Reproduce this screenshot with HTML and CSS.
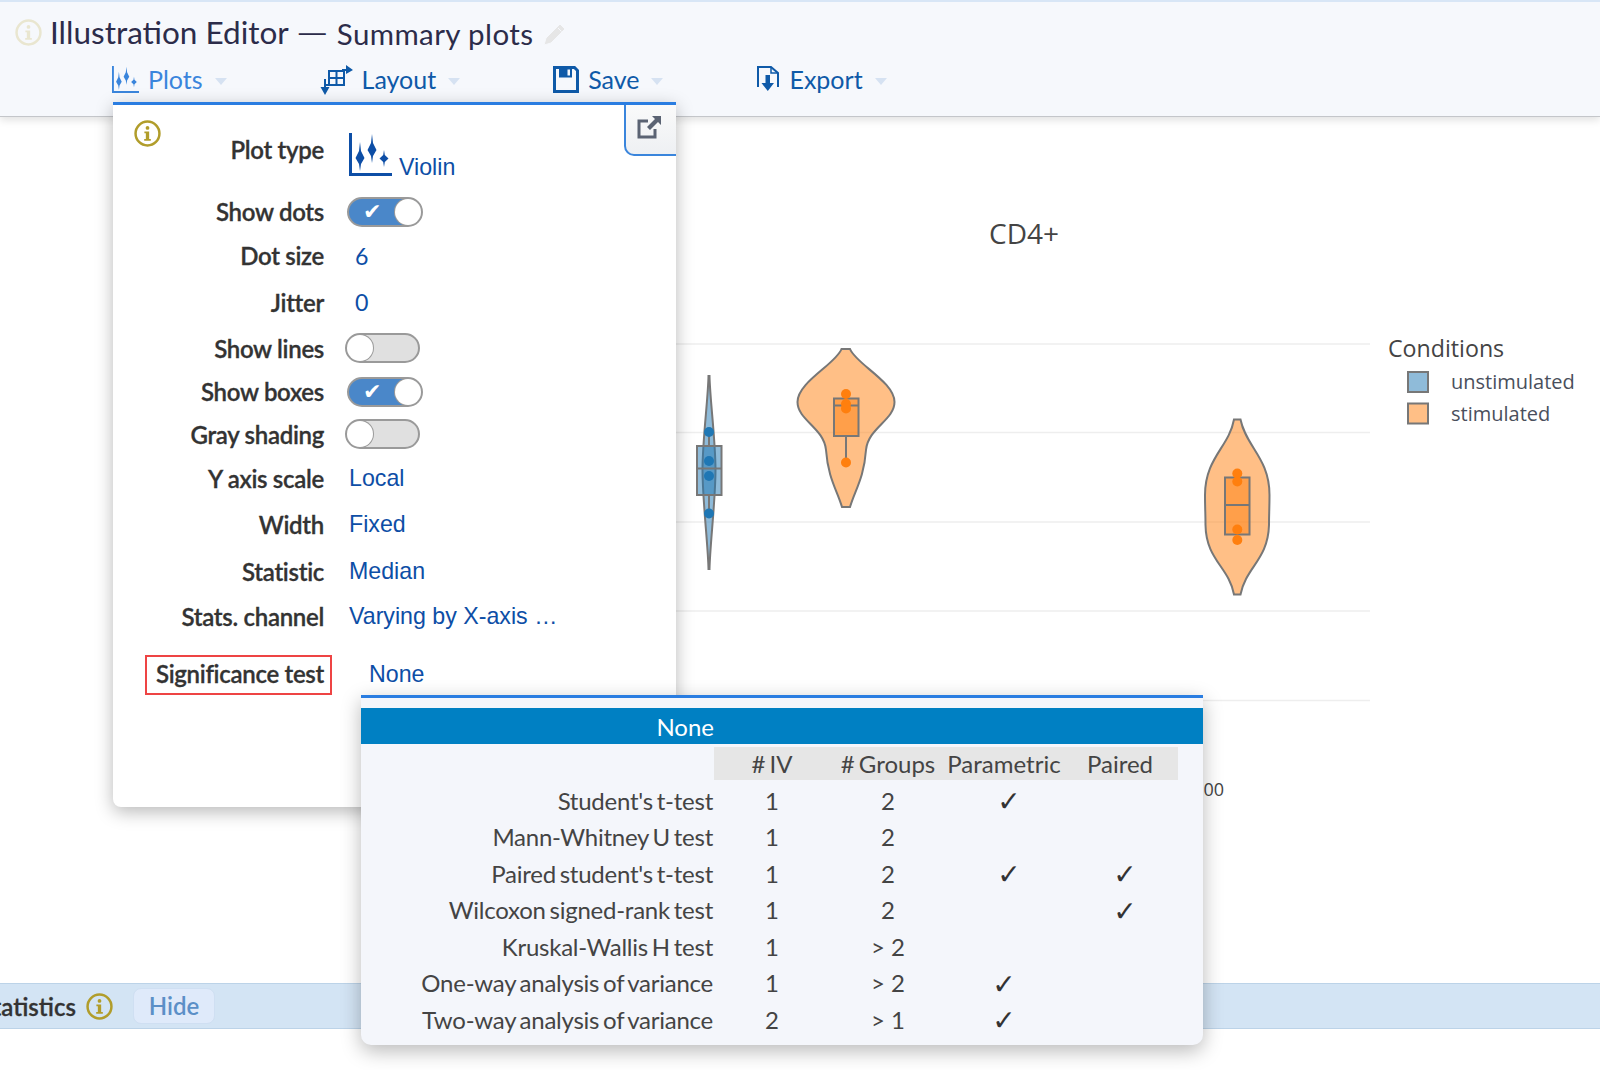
FILE: index.html
```html
<!DOCTYPE html>
<html lang="en">

<head>
    <meta charset="UTF-8">
    <title>Illustration Editor</title>
    <link rel="stylesheet" href="styles.css">
</head>

<body>
    <svg class="defs" width="0" height="0">
        <symbol id="icon-info" viewBox="0 0 26 26">
            <circle cx="13" cy="13" r="11.5" fill="none" stroke="currentColor" stroke-width="2.4" />
            <circle cx="13" cy="7.6" r="1.8" fill="currentColor" />
            <path d="M10 11h4.6v7.2h1.6v1.8H9.8v-1.8h1.6v-5.4H10z" fill="currentColor" />
        </symbol>
        <symbol id="icon-violin" viewBox="0 0 43 43">
            <path d="M1.500 0v41.500H43" fill="none" stroke="currentColor" stroke-width="3" />
            <path d="M11 9l1 9 3.500 7-3.500 6-1 7-1-7-3.500-6 3.500-7zM23 1l1 9 3.500 7-3.500 6-1 7-1-7-3.500-6 3.500-7zM35 17l.8 5 3.700 3.500-3.700 3.500-.8 5-.8-5-3.700-3.500 3.700-3.500z" fill="currentColor" />
        </symbol>
    </svg>

    <header class="topbar">
        <div class="title-row">
            <svg class="title-info"><use href="#icon-info" /></svg>
            <span class="title">Illustration Editor</span>
            <span class="dash">—</span>
            <span class="subtitle">Summary plots</span>
            <svg class="pencil" viewBox="0 0 24 24">
                <path d="M17 2l5 5L8 21l-7 2 2-7zM15 6l3.500 3.500" fill="currentColor" stroke="#f6f8fc" stroke-width="1" />
            </svg>
        </div>
        <nav class="menu">
            <div class="menu-item active">
                <svg class="plots-icon"><use href="#icon-violin" /></svg>
                <span>Plots</span><i class="caret"></i>
            </div>
            <div class="menu-item">
                <svg class="layout-icon" viewBox="0 0 33 30">
                    <path d="M9 6h15v14H9zM9 13h15M16.500 6v14M6 20h3" fill="none" stroke="currentColor" stroke-width="2" />
                    <path d="M22 5h5M5 14v9" fill="none" stroke="currentColor" stroke-width="2" />
                    <path d="M26 0l7 5-7 4zM.5 22h9l-4.500 8z" fill="currentColor" />
                </svg>
                <span>Layout</span><i class="caret"></i>
            </div>
            <div class="menu-item">
                <svg class="save-icon" viewBox="0 0 26 27">
                    <path d="M1.500 1.500h20l3 3v21h-23z" fill="none" stroke="currentColor" stroke-width="3" />
                    <path d="M6 1.500h13v10H6z" fill="currentColor" />
                    <path d="M14.500 3.500h2.500v6h-2.500z" fill="#f6f8fc" />
                </svg>
                <span>Save</span><i class="caret"></i>
            </div>
            <div class="menu-item">
                <svg class="export-icon" viewBox="0 0 24 28">
                    <path d="M2 22V2h13l7 6v14" fill="none" stroke="currentColor" stroke-width="2" />
                    <path d="M15 2v6h7" fill="none" stroke="currentColor" stroke-width="1.500" />
                    <path d="M9.500 10h4.500v8h4l-6.200 8-6.300-8h4z" fill="currentColor" />
                </svg>
                <span>Export</span><i class="caret"></i>
            </div>
        </nav>
    </header>

    <main class="workspace">
        <svg class="chart" viewBox="0 116 1600 868">
            <g class="grid">
                <path d="M676 344H1370M676 432.500H1370M676 522H1370M676 611H1370M676 700.500H1370" />
            </g>
            <text class="chart-title" x="1024" y="244" text-anchor="middle">CD4+</text>
            <text class="tick" x="1224" y="796" text-anchor="end">1000</text>

            <!-- unstimulated -->
            <g class="trace blue">
                <path class="violin" d="M708.500 376h1C710 400 715.500 440 715.500 470S710 545 709.500 569h-1C708 545 702.500 500 702.500 470S708 400 708.500 376z" />
                <path class="whisker" d="M709 432V446M709 495V513" />
                <rect class="box" x="697" y="446" width="24.500" height="49" />
                <path class="whisker" d="M697 468.500H721.500" />
                <circle cx="709" cy="432" r="5" />
                <circle cx="709" cy="461" r="5" />
                <circle cx="709" cy="476" r="5" />
                <circle cx="709" cy="513.500" r="5" />
            </g>

            <!-- stimulated, first group -->
            <g class="trace orange">
                <path class="violin" d="M841.500 349h8.500C856 364 894.500 382 894.500 402C894.500 420 868 428 866 450C864 478 855 490 850 507h-8C837 490 828 478 826 450C824 428 797.500 420 797.500 402C797.500 382 836 364 841.500 349z" />
                <path class="whisker" d="M846 436V462" />
                <rect class="box" x="834" y="398.500" width="24.500" height="37.500" />
                <path class="whisker" d="M834 405.500H858.500" />
                <circle cx="846" cy="394" r="5" />
                <circle cx="846" cy="404" r="5" />
                <circle cx="846" cy="408.500" r="5" />
                <circle cx="846" cy="462.500" r="5" />
            </g>

            <!-- stimulated, second group -->
            <g class="trace orange">
                <path class="violin" d="M1234 419.500h6.500C1246 447 1269.500 458 1269.500 495C1269.500 508 1269 514 1269 525C1268 560 1246 567 1240.500 594.500h-6.500C1229 567 1206 560 1205.500 525C1205.500 514 1205 508 1205 495C1205 458 1229 447 1234 419.500z" />
                <rect class="box" x="1225" y="477.500" width="24.500" height="57" />
                <path class="whisker" d="M1225 505H1249.500" />
                <circle cx="1237.300" cy="473.500" r="5" />
                <circle cx="1237.300" cy="481.500" r="5" />
                <circle cx="1237.300" cy="529.500" r="5" />
                <circle cx="1237.300" cy="540" r="5" />
            </g>

            <text class="legend-title" x="1388" y="357">Conditions</text>
            <rect class="swatch blue-fill" x="1408" y="372" width="20" height="20" />
            <text class="legend-label" x="1451" y="389">unstimulated</text>
            <rect class="swatch orange-fill" x="1408" y="403.500" width="20" height="20" />
            <text class="legend-label" x="1451" y="421">stimulated</text>
        </svg>

        <section class="plot-panel">
            <svg class="panel-info"><use href="#icon-info" /></svg>
            <div class="panel-tab">
                <svg viewBox="0 0 24 23">
                    <path d="M11 5H2v16h16v-8" fill="none" stroke="currentColor" stroke-width="3" />
                    <path d="M15 0h9v9l-3-3-8 8-3-3 8-8z" fill="currentColor" />
                </svg>
            </div>

            <div class="row row-plot-type">
                <div class="label">Plot type</div>
                <div class="value violin-value">
                    <svg><use href="#icon-violin" /></svg>
                    <span>Violin</span>
                </div>
            </div>
            <div class="row h43">
                <div class="label">Show dots</div>
                <div class="toggle on"></div>
            </div>
            <div class="row h45">
                <div class="label">Dot size</div>
                <div class="value number">6</div>
            </div>
            <div class="row h48">
                <div class="label">Jitter</div>
                <div class="value number">0</div>
            </div>
            <div class="row h44">
                <div class="label">Show lines</div>
                <div class="toggle"></div>
            </div>
            <div class="row h43">
                <div class="label">Show boxes</div>
                <div class="toggle on"></div>
            </div>
            <div class="row h42">
                <div class="label">Gray shading</div>
                <div class="toggle"></div>
            </div>
            <div class="row h46">
                <div class="label">Y axis scale</div>
                <div class="value">Local</div>
            </div>
            <div class="row h46">
                <div class="label">Width</div>
                <div class="value">Fixed</div>
            </div>
            <div class="row h48">
                <div class="label">Statistic</div>
                <div class="value">Median</div>
            </div>
            <div class="row h43">
                <div class="label">Stats. channel</div>
                <div class="value">Varying by X-axis …</div>
            </div>
            <div class="row row-sig">
                <div class="label sig-label">Significance test</div>
                <div class="value sig-value">None</div>
            </div>
        </section>

        <section class="test-menu">
            <div class="test-selected">None</div>
            <table class="test-table">
                <thead>
                    <tr>
                        <td class="blank"></td>
                        <th># IV</th>
                        <th># Groups</th>
                        <th>Parametric</th>
                        <th>Paired</th>
                    </tr>
                </thead>
                <tbody>
                    <tr>
                        <td class="name">Student's t-test</td>
                        <td>1</td>
                        <td>2</td>
                        <td class="check shift">✓</td>
                        <td></td>
                    </tr>
                    <tr>
                        <td class="name">Mann-Whitney U test</td>
                        <td>1</td>
                        <td>2</td>
                        <td></td>
                        <td></td>
                    </tr>
                    <tr>
                        <td class="name">Paired student's t-test</td>
                        <td>1</td>
                        <td>2</td>
                        <td class="check shift">✓</td>
                        <td class="check shift">✓</td>
                    </tr>
                    <tr>
                        <td class="name">Wilcoxon signed-rank test</td>
                        <td>1</td>
                        <td>2</td>
                        <td></td>
                        <td class="check shift">✓</td>
                    </tr>
                    <tr>
                        <td class="name">Kruskal-Wallis H test</td>
                        <td>1</td>
                        <td>&gt; 2</td>
                        <td></td>
                        <td></td>
                    </tr>
                    <tr>
                        <td class="name">One-way analysis of variance</td>
                        <td>1</td>
                        <td>&gt; 2</td>
                        <td class="check">✓</td>
                        <td></td>
                    </tr>
                    <tr>
                        <td class="name">Two-way analysis of variance</td>
                        <td>2</td>
                        <td>&gt; 1</td>
                        <td class="check">✓</td>
                        <td></td>
                    </tr>
                </tbody>
            </table>
        </section>
    </main>

    <div class="stats-band">
        <span class="stats-title">Statistics</span>
        <svg class="stats-info"><use href="#icon-info" /></svg>
        <span class="hide-btn">Hide</span>
    </div>
</body>

</html>
```

FILE: styles.css
```css
* {
    margin: 0;
    padding: 0;
    box-sizing: border-box;
}

html,
body {
    height: 100%;
    overflow: hidden;
}

body {
    font-family: 'Lato', sans-serif;
    background-color: #fff;
    color: #333;
}

.defs {
    display: block;
}

/* top bar */
.topbar {
    position: relative;
    height: 117px;
    background-color: #f6f8fc;
    border-top: 2px solid #d8e6f6;
    border-bottom: 1px solid #c4c6ca;
    box-shadow: 0 3px 8px rgba(0, 0, 0, 0.12);
}

.title-row {
    display: flex;
    align-items: center;
    height: 60px;
    padding-left: 15px;
    color: #2c2c4a;
}

.title-info {
    width: 27px;
    height: 27px;
    margin-right: 8px;
    color: #e9e6d0;
}

.title {
    font-size: 31.500px;
}

.dash {
    font-family: 'Liberation Sans', sans-serif;
    font-size: 27px;
    margin: 0 11px 0 10px;
}

.subtitle {
    font-size: 29.500px;
    letter-spacing: 0.4px;
    margin-top: 3px;
}

.pencil {
    width: 24px;
    height: 24px;
    margin-left: 10px;
    margin-top: 3px;
    color: #e6e6e6;
}

.menu {
    display: flex;
    align-items: center;
    gap: 93px;
    padding-left: 112px;
    height: 38px;
    margin-top: -2px;
}

.menu-item {
    display: flex;
    align-items: center;
    font-size: 25px;
    color: #0f5aa8;
}

.menu-item.active {
    color: #3a85dc;
}

.menu-item span {
    margin-left: 9px;
}

.caret {
    width: 0;
    height: 0;
    margin-left: 12px;
    margin-top: 4px;
    border-left: 6px solid transparent;
    border-right: 6px solid transparent;
    border-top: 7px solid #d6e2f2;
}

.plots-icon {
    width: 27px;
    height: 27px;
}

.layout-icon {
    width: 33px;
    height: 30px;
    margin-top: 2px;
}

.save-icon {
    width: 26px;
    height: 27px;
}

.export-icon {
    width: 24px;
    height: 28px;
}

/* chart area */
.workspace {
    position: relative;
    height: 867px;
}

.chart {
    display: block;
    width: 1600px;
    height: 868px;
    margin-top: -1px;
    font-family: 'Open Sans', sans-serif;
}

.grid path {
    fill: none;
    stroke: #eeeeee;
    stroke-width: 1.500;
}

.chart-title {
    font-size: 28px;
    fill: #444;
}

.tick {
    font-size: 18px;
    fill: #444;
}

.legend-title {
    font-size: 23.200px;
    fill: #444;
}

.legend-label {
    font-size: 20px;
    fill: #4a4f5c;
}

.swatch {
    stroke: #777;
    stroke-width: 2;
}

.blue-fill {
    fill: rgba(31, 119, 180, 0.5);
}

.orange-fill {
    fill: rgba(255, 127, 14, 0.5);
}

.violin,
.box {
    stroke: #777;
    stroke-width: 2;
}

.whisker {
    fill: none;
    stroke: #777;
    stroke-width: 2;
}

.blue .violin,
.blue .box {
    fill: rgba(31, 119, 180, 0.5);
}

.orange .violin,
.orange .box {
    fill: rgba(255, 127, 14, 0.5);
}

.blue circle {
    fill: #1f77b4;
}

.orange circle {
    fill: #ff7f0e;
}

/* plot options dropdown */
.plot-panel {
    position: absolute;
    left: 113px;
    top: -14px;
    width: 563px;
    height: 705px;
    padding-top: 3px;
    background-color: #fff;
    border-top: 3px solid #2a7de1;
    border-radius: 0 0 8px 8px;
    box-shadow: 0 5px 18px rgba(0, 0, 0, 0.28);
}

.panel-info {
    position: absolute;
    left: 21px;
    top: 15px;
    width: 27px;
    height: 27px;
    color: #b19d2b;
}

.panel-tab {
    position: absolute;
    right: 0;
    top: 0;
    display: flex;
    justify-content: center;
    width: 52px;
    height: 51px;
    padding-top: 11px;
    padding-right: 4px;
    background: linear-gradient(#fafafa, #eef0f3);
    border-left: 2px solid #3a85dc;
    border-bottom: 2px solid #3a85dc;
    border-bottom-left-radius: 10px;
    color: #5b6373;
}

.panel-tab svg {
    width: 24px;
    height: 23px;
}

.row {
    display: flex;
    align-items: center;
}

.row-plot-type {
    height: 82px;
    align-items: flex-start;
    padding-top: 27px;
}

.h42 {
    height: 42px;
}

.h43 {
    height: 43px;
}

.h44 {
    height: 44px;
}

.h45 {
    height: 45px;
}

.h46 {
    height: 46px;
}

.h48 {
    height: 48px;
}

.row-sig {
    height: 40px;
    margin-top: 17px;
}

.label {
    width: 211px;
    text-align: right;
    font-size: 24px;
    font-weight: 600;
    color: #333;
    letter-spacing: -0.3px;
    -webkit-text-stroke: 0.3px #333;
}

.value {
    margin-left: 25px;
    font-family: 'Liberation Sans', sans-serif;
    font-size: 23.200px;
    color: #0d4ea6;
}

.number {
    font-family: 'Lato', sans-serif;
    margin-left: 31px;
}

.violin-value {
    display: flex;
    align-items: flex-end;
    height: 43px;
    margin-top: -2px;
}

.violin-value svg {
    width: 43px;
    height: 43px;
    margin-right: 7px;
}

.violin-value span {
    margin-bottom: -5px;
}

.toggle {
    position: relative;
    width: 75px;
    height: 30px;
    margin-left: 21px;
    background-color: #e0e0e0;
    border: 2px solid #9a9a9a;
    border-radius: 15px;
}

.toggle::after {
    content: "";
    position: absolute;
    left: 0;
    top: 0;
    width: 26px;
    height: 26px;
    background-color: #fff;
    border-radius: 50%;
    box-shadow: 0 0 0 1px #9a9a9a;
}

.toggle.on {
    width: 76px;
    margin-left: 23px;
    background-color: #4a87c9;
}

.toggle.on::after {
    left: auto;
    right: 0;
}

.toggle.on::before {
    content: "✔";
    position: absolute;
    left: 14px;
    top: 0;
    font-family: 'DejaVu Sans', sans-serif;
    font-size: 22px;
    line-height: 26px;
    color: #fff;
}

.sig-label {
    width: 187px;
    height: 40px;
    margin-left: 32px;
    padding-right: 6px;
    line-height: 33px;
    white-space: nowrap;
    border: 2px solid #ee4444;
}

.sig-value {
    margin-left: 37px;
    margin-top: -2px;
}

/* significance test dropdown */
.test-menu {
    position: absolute;
    left: 361px;
    top: 579px;
    width: 842px;
    height: 350px;
    padding-top: 10px;
    background-color: #f4f6fb;
    border-top: 3px solid #2a7de1;
    border-radius: 0 0 10px 10px;
    box-shadow: 0 6px 20px rgba(0, 0, 0, 0.28);
    font-size: 24px;
    color: #444;
}

.test-selected {
    height: 36px;
    padding-right: 489px;
    line-height: 38px;
    text-align: right;
    background-color: #0080c3;
    color: #fff;
}

.test-table {
    width: 817px;
    margin-top: 3px;
    border-collapse: collapse;
    table-layout: fixed;
}

.test-table th,
.test-table td {
    height: 36.500px;
    padding: 0;
    text-align: center;
    font-weight: 400;
    white-space: nowrap;
}

.test-table th,
.test-table .blank {
    height: 33px;
}

.test-table th {
    word-spacing: -2px;
    background-color: #e6e6e6;
}

.test-table .blank {
    width: 353px;
    background-color: transparent;
}

.test-table tbody tr:first-child td {
    height: 38.500px;
    padding-top: 2px;
}

.test-table .name {
    padding-right: 1px;
    text-align: right;
    letter-spacing: -0.25px;
    word-spacing: -2px;
}

.test-table .check {
    padding-top: 4px;
    font-family: 'DejaVu Sans', sans-serif;
    font-size: 28px;
    line-height: 1;
    color: #333;
}

.test-table tbody tr:first-child .check {
    padding-top: 6px;
}

.test-table .shift {
    padding-left: 10px;
}

/* bottom band */
.stats-band {
    display: flex;
    align-items: center;
    height: 46px;
    background-color: #d3e4f4;
    border-top: 1px solid #bcd3e8;
    border-bottom: 1px solid #bcd3e8;
    font-size: 24px;
}

.stats-title {
    margin-left: -20px;
    font-weight: 600;
    color: #333;
    -webkit-text-stroke: 0.3px #333;
}

.stats-info {
    width: 27px;
    height: 27px;
    margin-left: 10px;
    color: #b19d2b;
}

.hide-btn {
    width: 82px;
    height: 36px;
    margin-left: 20px;
    line-height: 34px;
    text-align: center;
    font-weight: 600;
    color: #5b8fc7;
    background-color: #dfeafa;
    border: 1px solid #cfdff2;
    border-radius: 8px;
}
```
